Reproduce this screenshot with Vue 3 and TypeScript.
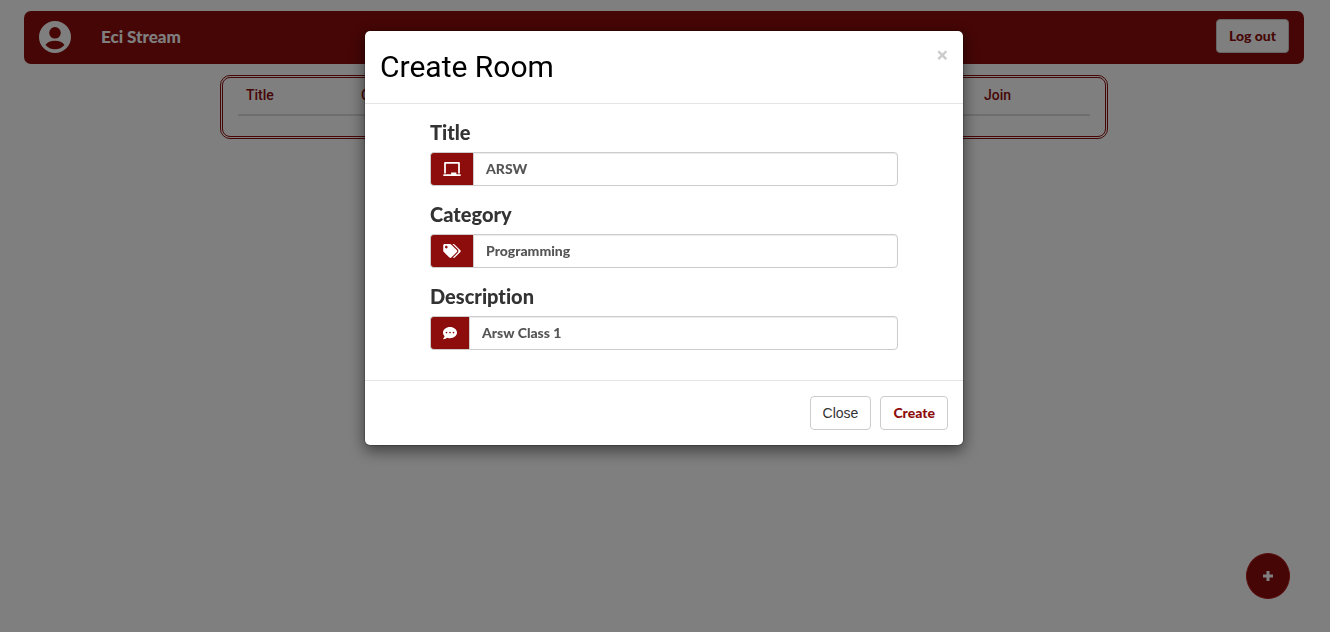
<script setup lang="ts">
import { ref } from 'vue'

interface Field {
  id: string
  label: string
  value: string
  viewBox: string
  width: number
  path: string
}

const fields = ref<Field[]>([
  {
    id: 'room-title',
    label: 'Title',
    value: 'ARSW',
    viewBox: '0 0 640 512',
    width: 18,
    path: 'M96 64h448v352h64V40c0-22.06-17.94-40-40-40H72C49.94 0 32 17.94 32 40v376h64V64zm528 384H480v-64H288v64H16c-8.84 0-16 7.16-16 16v32c0 8.84 7.16 16 16 16h608c8.84 0 16-7.16 16-16v-32c0-8.84-7.16-16-16-16z',
  },
  {
    id: 'room-category',
    label: 'Category',
    value: 'Programming',
    viewBox: '0 0 640 512',
    width: 18,
    path: 'M497.941 225.941L286.059 14.059A48 48 0 0 0 252.118 0H48C21.49 0 0 21.49 0 48v204.118a48 48 0 0 0 14.059 33.941l211.882 211.882c18.744 18.745 49.136 18.746 67.882 0l204.118-204.118c18.745-18.745 18.745-49.137 0-67.882zM112 160c-26.51 0-48-21.49-48-48s21.49-48 48-48 48 21.49 48 48-21.49 48-48 48zm513.941 133.823L421.823 497.941c-18.745 18.745-49.137 18.745-67.882 0l-.36-.36L527.64 323.522c16.999-16.999 26.36-39.6 26.36-63.64s-9.362-46.641-26.36-63.64L331.397 0h48.721a48 48 0 0 1 33.941 14.059l211.882 211.882c18.745 18.745 18.745 49.137 0 67.882z',
  },
  {
    id: 'room-description',
    label: 'Description',
    value: 'Arsw Class 1',
    viewBox: '0 0 512 512',
    width: 14,
    path: 'M256 32C114.6 32 0 125.1 0 240c0 49.6 21.4 95 57 130.7C44.5 421.1 2.7 466 2.2 466.5c-2.2 2.3-2.8 5.7-1.5 8.7S4.8 480 8 480c66.3 0 116-31.8 140.6-51.4 32.7 12.3 69 19.4 107.4 19.4 141.4 0 256-93.1 256-208S397.4 32 256 32zM128 272c-17.7 0-32-14.3-32-32s14.3-32 32-32 32 14.3 32 32-14.3 32-32 32zm128 0c-17.7 0-32-14.3-32-32s14.3-32 32-32 32 14.3 32 32-14.3 32-32 32zm128 0c-17.7 0-32-14.3-32-32s14.3-32 32-32 32 14.3 32 32-14.3 32-32 32z',
  },
])
</script>

<template>
  <div class="page">
    <header class="navbar">
      <svg class="avatar" viewBox="0 0 32 32" aria-hidden="true">
        <path
          fill-rule="evenodd"
          d="M16 0a16 16 0 1 0 0 32a16 16 0 1 0 0-32zM16 6a5.8 5.8 0 1 1 0 11.600a5.8 5.8 0 1 1 0-11.600zM6.500 24C8.500 21 11.500 19.700 16 19.700S23.500 21 25.500 24C23 26.800 20 28.200 16 28.200S9 26.800 6.500 24z"
        />
      </svg>
      <span class="brand">Eci Stream</span>
      <button type="button" class="btn btn-strong logout">Log out</button>
    </header>

    <main class="rooms">
      <table>
        <thead>
          <tr>
            <th class="col-title">Title</th>
            <th>Category</th>
            <th class="col-join">Join</th>
          </tr>
        </thead>
      </table>
    </main>

    <button type="button" class="fab" aria-label="Create room">
      <svg viewBox="0 0 10 10" aria-hidden="true"><path d="M3.500 0h3v3.500H10v3H6.500V10h-3V6.500H0v-3h3.500z" /></svg>
    </button>

    <div class="overlay">
      <form class="modal" role="dialog" aria-labelledby="modal-title" @submit.prevent>
        <div class="modal-header">
          <h1 id="modal-title">Create Room</h1>
          <button type="button" class="dismiss" aria-label="Dismiss">×</button>
        </div>
        <div class="modal-body">
          <div v-for="field in fields" :key="field.id" class="field">
            <label :for="field.id">{{ field.label }}</label>
            <div class="input-group">
              <span class="addon">
                <svg :viewBox="field.viewBox" :width="field.width" height="14" aria-hidden="true">
                  <path :d="field.path" />
                </svg>
              </span>
              <input :id="field.id" v-model="field.value" type="text" />
            </div>
          </div>
        </div>
        <div class="modal-footer">
          <button type="button" class="btn">Close</button>
          <button type="submit" class="btn btn-strong">Create</button>
        </div>
      </form>
    </div>
  </div>
</template>

<style>
body {
  margin: 0;
  background: #fff;
}
</style>

<style scoped>
* {
  box-sizing: border-box;
}

.page {
  min-height: 100vh;
  padding: 11px 26px 0 24px;
  font-family: Roboto, 'Liberation Sans', sans-serif;
  font-size: 14px;
  line-height: 20px;
  color: #333;
}

.navbar {
  display: flex;
  align-items: center;
  height: 53px;
  padding: 0 15px 1px;
  border-radius: 7px;
  background: #8d0c0c;
}

.avatar {
  width: 32px;
  height: 32px;
  fill: #fff;
}

.brand {
  margin-left: 30px;
  font-family: Lato, 'Open Sans', sans-serif;
  font-size: 17px;
  font-weight: 900;
  color: #fff;
}

.btn {
  height: 34px;
  padding: 0 12px;
  border: 1px solid #ccc;
  border-radius: 4px;
  background: #fff;
  font-family: 'Liberation Sans', Arial, sans-serif;
  font-size: 14px;
  line-height: 20px;
  color: #333;
}

.btn-strong {
  font-family: Lato, 'Open Sans', sans-serif;
  font-weight: 900;
  color: #8d0c0c;
}

.logout {
  margin-left: auto;
  margin-bottom: 2px;
}

.rooms {
  max-width: 888px;
  min-height: 64px;
  margin: 11px auto 0;
  padding: 0 15px;
  border: 3px double #8d0c0c;
  border-radius: 10px;
}

table {
  width: 100%;
  table-layout: fixed;
  border-collapse: collapse;
}

th {
  padding: 7px 8px 9px;
  border-bottom: 2px solid #ddd;
  font-weight: 500;
  text-align: left;
  color: #8d0c0c;
}

.col-title {
  width: 115px;
}

.col-join {
  width: 114px;
}

.fab {
  position: fixed;
  right: 40px;
  bottom: 33px;
  display: flex;
  align-items: center;
  justify-content: center;
  width: 44px;
  height: 46px;
  padding: 0;
  border: 1px solid #b01818;
  border-radius: 50%;
  background: #8d0c0c;
}

.fab svg {
  width: 10px;
  height: 10px;
  fill: #fff;
}

.overlay {
  position: fixed;
  inset: 0;
  padding: 30px 2px 30px 0;
  background: rgba(0, 0, 0, 0.5);
}

.modal {
  max-width: 600px;
  margin: 0 auto;
  border: 1px solid rgba(0, 0, 0, 0.2);
  border-radius: 6px;
  background: #fff;
  background-clip: padding-box;
  box-shadow: 0 5px 15px rgba(0, 0, 0, 0.5);
}

.modal-header {
  display: flex;
  align-items: flex-start;
  justify-content: space-between;
  padding: 15px;
  border-bottom: 1px solid #e5e5e5;
}

h1 {
  margin: 0;
  font-size: 30px;
  font-weight: 400;
  line-height: 42px;
  color: #000;
}

.dismiss {
  padding: 0;
  border: 0;
  background: none;
  font-family: Roboto, 'Liberation Sans', sans-serif;
  font-size: 21px;
  font-weight: 700;
  line-height: 18px;
  color: #ccc;
}

.modal-body {
  padding: 15px 65px 30px;
}

.field + .field {
  margin-top: 15px;
}

label {
  display: block;
  margin-bottom: 7px;
  font-family: Lato, 'Open Sans', sans-serif;
  font-size: 20px;
  font-variant-ligatures: none;
  font-weight: 900;
  line-height: 26px;
}

.input-group {
  display: flex;
  height: 34px;
}

.addon {
  display: flex;
  align-items: center;
  padding: 0 12px;
  border: 1px solid #ccc;
  border-right: 0;
  border-radius: 4px 0 0 4px;
  background: #8d0c0c;
}

.addon svg {
  fill: #fff;
}

input {
  flex: 1;
  min-width: 0;
  padding: 0 12px 2px;
  border: 1px solid #ccc;
  border-radius: 0 4px 4px 0;
  background: #fff;
  box-shadow: inset 0 1px 1px rgba(0, 0, 0, 0.08);
  font-family: Lato, 'Open Sans', sans-serif;
  font-size: 14px;
  font-weight: 900;
  color: #555;
}

.modal-footer {
  display: flex;
  justify-content: flex-end;
  gap: 9px;
  padding: 15px;
  border-top: 1px solid #e5e5e5;
}
</style>
